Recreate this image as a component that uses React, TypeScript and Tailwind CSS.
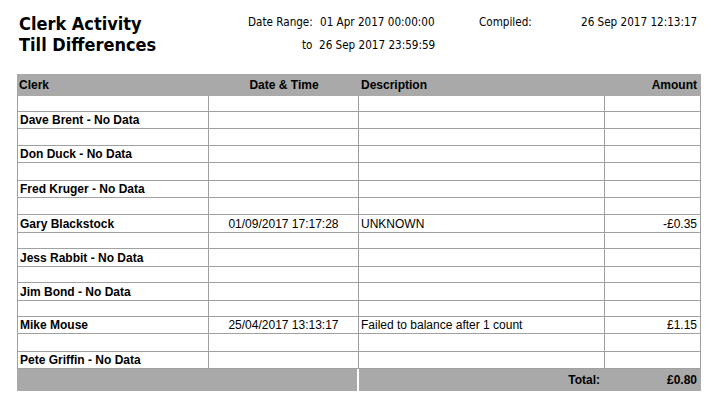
import React from 'react';

interface Row {
    clerk: string;
    date?: string;
    description?: string;
    amount?: string;
    h: string;
}

// row heights follow the report's uneven print spacing
const rows: Row[] = [
    { clerk: '', h: 'h-[16px]' },
    { clerk: 'Dave Brent - No Data', h: 'h-[17px]' },
    { clerk: '', h: 'h-[17px]' },
    { clerk: 'Don Duck - No Data', h: 'h-[17px]' },
    { clerk: '', h: 'h-[18px]' },
    { clerk: 'Fred Kruger - No Data', h: 'h-[17px]' },
    { clerk: '', h: 'h-[17px]' },
    { clerk: 'Gary Blackstock', date: '01/09/2017 17:17:28', description: 'UNKNOWN', amount: '-£0.35', h: 'h-[18px]' },
    { clerk: '', h: 'h-[16px]' },
    { clerk: 'Jess Rabbit - No Data', h: 'h-[18px]' },
    { clerk: '', h: 'h-[16px]' },
    { clerk: 'Jim Bond - No Data', h: 'h-[18px]' },
    { clerk: '', h: 'h-[16px]' },
    { clerk: 'Mike Mouse', date: '25/04/2017 13:13:17', description: 'Failed to balance after 1 count', amount: '£1.15', h: 'h-[17px]' },
    { clerk: '', h: 'h-[18px]' },
    { clerk: 'Pete Griffin - No Data', h: 'h-[17px]' },
];

const cell = 'border-r border-b border-[#a0a0a0] flex items-center whitespace-nowrap overflow-hidden';

const App: React.FC = () => {
    return (
        <div className="w-[722px] h-[408px] bg-white text-black overflow-hidden">
            {/* report heading */}
            <div className="h-[74px] flex font-['DejaVu_Sans_Condensed','DejaVu_Sans',sans-serif]">
                <div className="w-[248px] pl-[19px] pt-[13px] text-[18px] leading-[21px] font-bold">
                    <div>Clerk Activity</div>
                    <div>Till Differences</div>
                </div>
                <div className="pt-[11px] text-[11.6px] leading-[23px]">
                    <div className="flex">
                        <span className="w-[72px]">Date Range:</span>
                        <span className="w-[159px]">01 Apr 2017 00:00:00</span>
                        <span className="w-[102px]">Compiled:</span>
                        <span>26 Sep 2017 12:13:17</span>
                    </div>
                    <div className="flex">
                        <span className="w-[71px] pl-[54px]">to</span>
                        <span>26 Sep 2017 23:59:59</span>
                    </div>
                </div>
            </div>

            {/* table */}
            <div className="ml-[17px] w-[684px] font-['Liberation_Sans',Arial,sans-serif] text-[12px]">
                <div className="h-[22px] bg-[#a9a9a9] grid grid-cols-[192px_150px_246px_96px] items-center font-bold">
                    <div className="pl-[2px]">Clerk</div>
                    <div className="text-center">Date &amp; Time</div>
                    <div className="pl-[2px]">Description</div>
                    <div className="text-right pr-[4px]">Amount</div>
                </div>
                <div className="border-l border-[#a0a0a0] grid grid-cols-[191px_150px_246px_96px]">
                    {rows.map((row, i) => (
                        <React.Fragment key={i}>
                            <div className={`${cell} ${row.h} pl-[2px] font-bold`}>{row.clerk}</div>
                            <div className={`${cell} ${row.h} justify-center`}>{row.date}</div>
                            <div className={`${cell} ${row.h} pl-[2px]`}>{row.description}</div>
                            <div className={`${cell} ${row.h} justify-end pr-[3px]`}>{row.amount}</div>
                        </React.Fragment>
                    ))}
                </div>
                <div className="h-[22px] flex gap-[2px] font-bold">
                    <div className="w-[340px] bg-[#a9a9a9]" />
                    <div className="flex-1 bg-[#a9a9a9] flex items-center justify-end">
                        <span className="w-[245px] text-right pr-[4px]">Total:</span>
                        <span className="w-[97px] text-right pr-[4px]">£0.80</span>
                    </div>
                </div>
            </div>
        </div>
    );
};

export default App;
